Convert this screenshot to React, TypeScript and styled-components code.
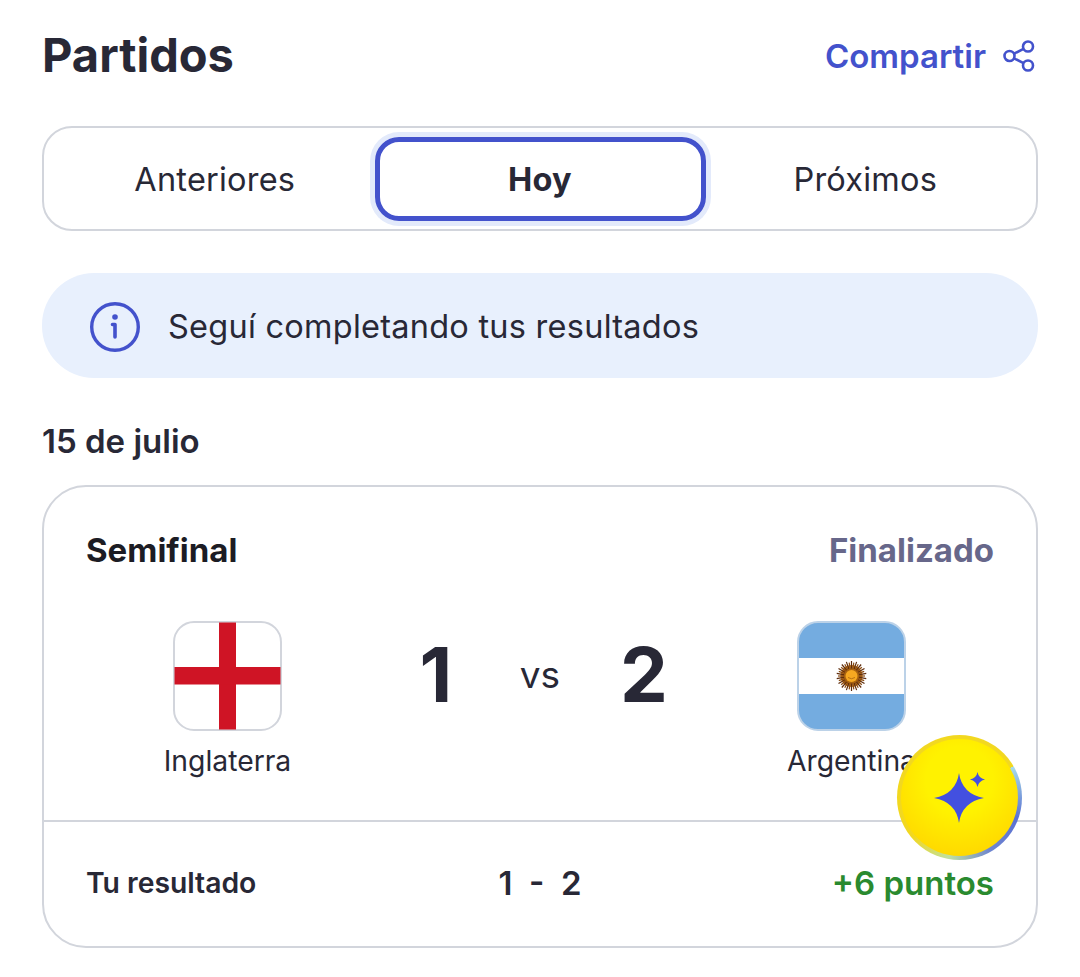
import * as React from 'react';
import styled, { createGlobalStyle } from 'styled-components';

const INK = '#282836';
const BLUE = '#4352cc';
const LINE = '#d2d5dc';

const GlobalStyle = createGlobalStyle`
  html, body {
    margin: 0;
    padding: 0;
    background: #fff;
  }
  body {
    font-family: Inter, "Liberation Sans", sans-serif;
    color: ${INK};
  }
`;

const Page = styled.div`
  position: relative;
  box-sizing: border-box;
  width: 1080px;
  height: 977px;
  padding: 25px 42px 0;
  overflow: hidden;
`;

const Header = styled.header`
  display: flex;
  align-items: center;
  justify-content: space-between;
  height: 62px;
`;

const Title = styled.h1`
  margin: 0 0 2px;
  font-size: 47px;
  line-height: 62px;
  font-weight: 700;
  color: ${INK};
`;

const ShareLink = styled.a`
  display: flex;
  align-items: center;
  gap: 17px;
  padding-right: 3px;
  font-size: 33px;
  font-weight: 600;
  color: ${BLUE};
`;

const Tabs = styled.nav`
  box-sizing: border-box;
  display: grid;
  grid-template-columns: 1fr 331px 1fr;
  align-items: center;
  height: 105px;
  margin-top: 39px;
  padding: 0 2px;
  border: 2px solid ${LINE};
  border-radius: 30px;
`;

const Tab = styled.div<{ $active?: boolean }>`
  box-sizing: border-box;
  display: flex;
  align-items: center;
  justify-content: center;
  height: 84px;
  padding-top: 2px;
  font-size: 32.5px;
  letter-spacing: 0.2px;
  font-weight: ${(p) => (p.$active ? 700 : 400)};
  border-radius: 24px;
  border: ${(p) => (p.$active ? `5px solid ${BLUE}` : 'none')};
  box-shadow: ${(p) => (p.$active ? '0 0 0 5px #e3eafb' : 'none')};
  &:first-child {
    padding-left: 9px;
  }
  &:last-child {
    padding-right: 9px;
  }
`;

const Banner = styled.div`
  box-sizing: border-box;
  display: flex;
  align-items: center;
  gap: 27px;
  height: 105px;
  margin-top: 42px;
  padding: 2px 0 0 47px;
  border-radius: 52px;
  background: #e8f0fd;
  font-size: 32.5px;
  letter-spacing: 0.25px;
`;

const DateLabel = styled.div`
  margin-top: 44px;
  font-size: 33px;
  line-height: 38px;
  font-weight: 600;
`;

const Card = styled.section`
  box-sizing: border-box;
  height: 463px;
  margin-top: 25px;
  border: 2px solid ${LINE};
  border-radius: 44px;
`;

const CardHead = styled.div`
  display: flex;
  align-items: center;
  justify-content: space-between;
  height: 40px;
  margin-top: 43px;
  padding: 0 42px;
`;

const Round = styled.span`
  font-size: 33px;
  font-weight: 700;
  color: #1c1c24;
`;

const Status = styled.span`
  font-size: 33px;
  font-weight: 700;
  color: #67678a;
`;

const Match = styled.div`
  display: grid;
  grid-template-columns: 284px 1fr 284px;
  height: 205px;
  margin-top: 45px;
  padding: 0 42px;
`;

const Team = styled.div`
  display: flex;
  flex-direction: column;
  align-items: center;
  gap: 13px;
  padding: 6px 1px 0 0;
  font-size: 28.3px;
`;

const TeamName = styled.span`
  line-height: 34px;
`;

const Flag = styled.div`
  display: block;
  width: 109px;
  height: 110px;
  line-height: 0;
`;

const Scores = styled.div`
  display: grid;
  grid-template-columns: repeat(3, 104px);
  justify-content: center;
  align-items: center;
  height: 118px;
`;

const Score = styled.span`
  text-align: center;
  font-size: 76px;
  font-weight: 700;
`;

const Versus = styled.span`
  text-align: center;
  font-size: 37px;
`;

const CardFoot = styled.div`
  display: grid;
  grid-template-columns: 1fr 1fr 1fr;
  align-items: center;
  height: 122px;
  padding: 0 42px;
  border-top: 2px solid ${LINE};
`;

const YourResult = styled.span`
  font-size: 28.3px;
  font-weight: 600;
`;

const Predicted = styled.span`
  text-align: center;
  font-size: 33px;
  font-weight: 600;
  white-space: pre;
`;

const Points = styled.span`
  text-align: right;
  font-size: 33px;
  font-weight: 600;
  color: #2a8a2f;
`;

const FloatButton = styled.button`
  position: absolute;
  left: 897px;
  top: 735px;
  display: flex;
  align-items: center;
  justify-content: center;
  box-sizing: border-box;
  width: 125px;
  height: 125px;
  padding: 0;
  border: none;
  border-radius: 50%;
  background: conic-gradient(from 60deg, #a8dce8, #5a70d2 50deg, #6f86d0 90deg, #bfe0a0 130deg, #f2d820 170deg, #f2d820 360deg);
  &::before {
    content: '';
    position: absolute;
    left: 4px;
    top: 4px;
    width: 117px;
    height: 117px;
    border-radius: 50%;
    background: radial-gradient(circle at 50% 35%, #fff200 35%, #ffd000 95%);
  }
  svg {
    position: relative;
  }
`;

function ShareIcon() {
  return (
    <svg width="32" height="32" viewBox="0 0 32 32" fill="none" stroke={BLUE} strokeWidth="2.6">
      <circle cx="6.5" cy="16" r="5" />
      <circle cx="25" cy="6.5" r="5" />
      <circle cx="25" cy="25.5" r="5" />
      <path d="M11 13.7 20.5 8.8M11 18.3 20.5 23.2" />
    </svg>
  );
}

function InfoIcon() {
  return (
    <svg width="52" height="52" viewBox="0 0 52 52" fill="none">
      <circle cx="26" cy="26" r="23.3" stroke={BLUE} strokeWidth="3.4" />
      <circle cx="26" cy="16" r="2.8" fill={BLUE} />
      <path d="M23.5 23.5H26V36" stroke={BLUE} strokeWidth="3.6" strokeLinecap="round" strokeLinejoin="round" />
    </svg>
  );
}

function EnglandFlag() {
  return (
    <svg width="109" height="110" viewBox="0 0 109 110">
      <rect x="1" y="1" width="107" height="108" rx="20" fill="#fff" stroke={LINE} strokeWidth="2" />
      <rect x="46" y="1.5" width="17" height="107" fill="#cf1425" />
      <rect x="1.5" y="46" width="106" height="17.5" fill="#cf1425" />
    </svg>
  );
}

const sunRays = Array.from({ length: 36 }, (_, i) => i * 10);

function ArgentinaFlag() {
  return (
    <svg width="109" height="110" viewBox="0 0 109 110">
      <defs>
        <clipPath id="flag-clip">
          <rect x="1" y="1" width="107" height="108" rx="20" />
        </clipPath>
      </defs>
      <g clipPath="url(#flag-clip)">
        <rect width="109" height="110" fill="#74ace0" />
        <rect y="37" width="109" height="36" fill="#fff" />
      </g>
      <rect x="1" y="1" width="107" height="108" rx="20" fill="none" stroke="#bcd2e8" strokeWidth="2" />
      <circle cx="54.5" cy="55" r="11" fill="#c07a22" />
      {sunRays.map((a, i) => (
        <line
          key={a}
          x1="54.5"
          y1={48}
          x2="54.5"
          y2={55 - (i % 2 ? 13.5 : 15)}
          stroke={i % 2 ? '#8a4a10' : '#5e2c0c'}
          strokeWidth="1.2"
          transform={`rotate(${a} 54.5 55)`}
        />
      ))}
      <circle cx="54.5" cy="55" r="7.5" fill="#a8620f" />
      <circle cx="54.5" cy="55" r="6" fill="#f6a821" />
      <path d="M51 56.5q3.5 2.5 7 0" fill="none" stroke="#a8620f" strokeWidth="0.8" />
    </svg>
  );
}

function SparkleIcon() {
  return (
    <svg width="51" height="51" viewBox="0 0 51 51" fill="#4350e0">
      <path d="M25 1Q28 22 50 26 28 30 25 51 22 30 0 26 22 22 25 1Z" />
      <path d="M43.5 0Q44.5 6 51 7.5 44.5 9 43.5 15 42.5 9 36 7.5 42.5 6 43.5 0Z" />
    </svg>
  );
}

export default function App() {
  return (
    <Page>
      <GlobalStyle />
      <Header>
        <Title>Partidos</Title>
        <ShareLink>
          Compartir
          <ShareIcon />
        </ShareLink>
      </Header>
      <Tabs>
        <Tab>Anteriores</Tab>
        <Tab $active>Hoy</Tab>
        <Tab>Próximos</Tab>
      </Tabs>
      <Banner>
        <InfoIcon />
        Seguí completando tus resultados
      </Banner>
      <DateLabel>15 de julio</DateLabel>
      <Card>
        <CardHead>
          <Round>Semifinal</Round>
          <Status>Finalizado</Status>
        </CardHead>
        <Match>
          <Team>
            <Flag>
              <EnglandFlag />
            </Flag>
            <TeamName>Inglaterra</TeamName>
          </Team>
          <Scores>
            <Score>1</Score>
            <Versus>vs</Versus>
            <Score>2</Score>
          </Scores>
          <Team>
            <Flag>
              <ArgentinaFlag />
            </Flag>
            <TeamName>Argentina</TeamName>
          </Team>
        </Match>
        <CardFoot>
          <YourResult>Tu resultado</YourResult>
          <Predicted>1  -  2</Predicted>
          <Points>+6 puntos</Points>
        </CardFoot>
      </Card>
      <FloatButton aria-label="Asistente">
        <SparkleIcon />
      </FloatButton>
    </Page>
  );
}
